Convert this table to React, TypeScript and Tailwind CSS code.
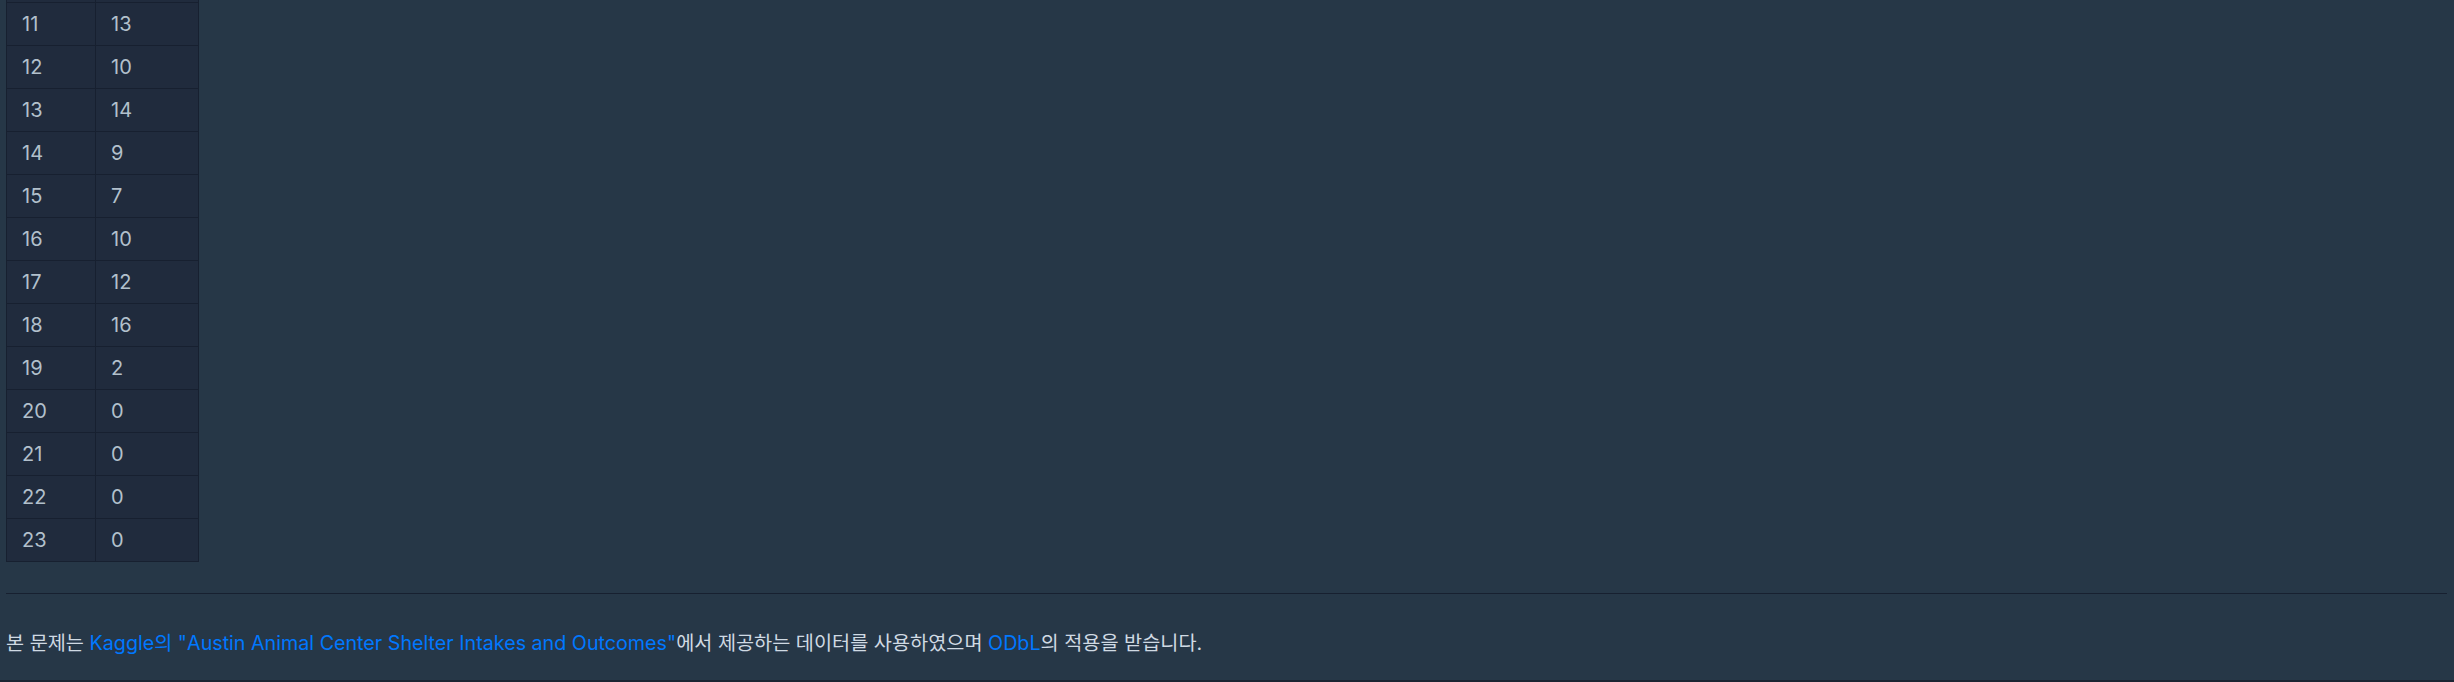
const rows: [number, number][] = [
  [11, 13],
  [12, 10],
  [13, 14],
  [14, 9],
  [15, 7],
  [16, 10],
  [17, 12],
  [18, 16],
  [19, 2],
  [20, 0],
  [21, 0],
  [22, 0],
  [23, 0],
];

const font = { fontFamily: "Inter, 'Noto Sans CJK KR', sans-serif" };

export default function App() {
  return (
    <div
      className="h-[682px] w-full overflow-hidden bg-[#263747] border-b-2 border-[#1b2533]"
      style={font}
    >
      <div className="pl-[6px] pr-[7px]">
        <div className="w-[193px] border-x border-[#172030] bg-[#202b3d] text-[20px] text-[#b2c0cc]">
          {/* tail of the row scrolled above */}
          <div className="flex h-[3px] border-b border-[#172030]">
            <div className="w-[89px] border-r border-[#172030]" />
          </div>
          {rows.map(([hour, count]) => (
            <div
              key={hour}
              className="flex h-[43px] items-center border-b border-[#172030]"
            >
              <div className="flex h-full w-[89px] items-center border-r border-[#172030] pl-[15px]">
                {hour}
              </div>
              <div className="flex h-full w-[102px] items-center pl-[15px]">
                {count}
              </div>
            </div>
          ))}
        </div>

        <hr className="mt-[31px] border-t border-[#172030]" />

        <p className="mt-[34px] text-[19.7px] leading-[30px] text-[#d0dae3]">
          본 문제는{" "}
          <a className="text-[#0078ff]" href="#">
            Kaggle의 "Austin Animal Center Shelter Intakes and Outcomes"
          </a>
          에서 제공하는 데이터를 사용하였으며{" "}
          <a className="text-[#0078ff]" href="#">
            ODbL
          </a>
          의 적용을 받습니다.
        </p>
      </div>
    </div>
  );
}
